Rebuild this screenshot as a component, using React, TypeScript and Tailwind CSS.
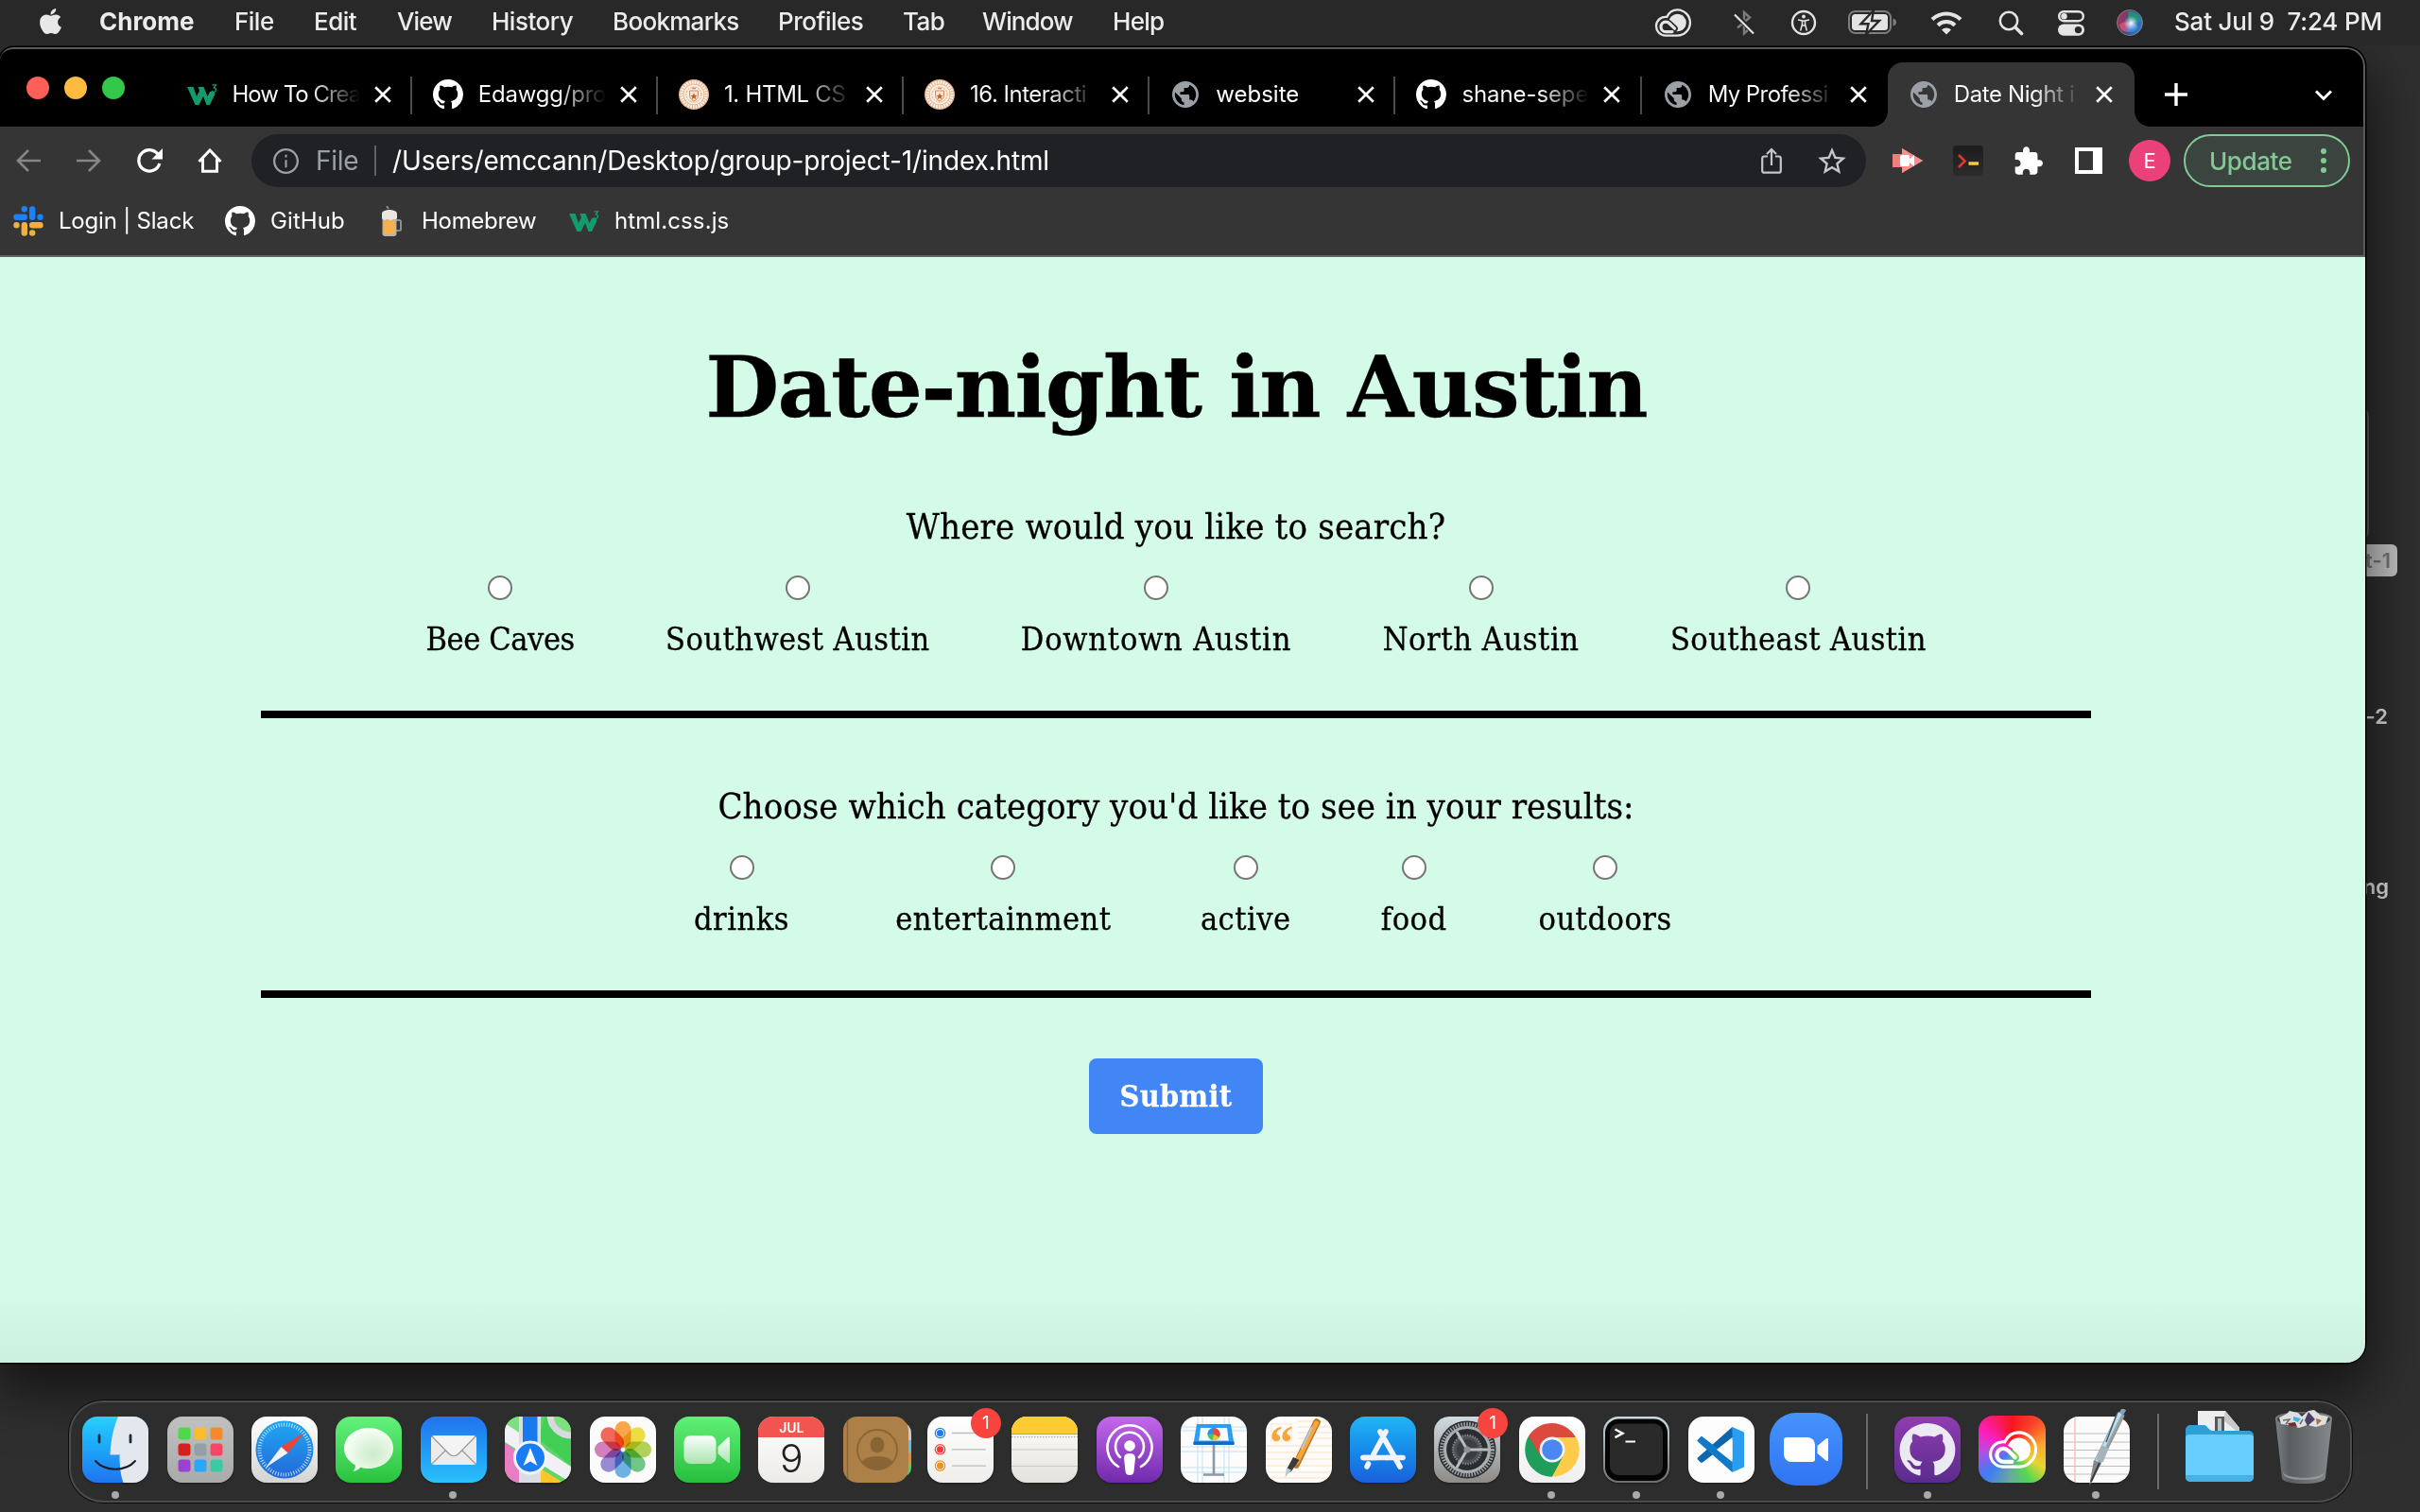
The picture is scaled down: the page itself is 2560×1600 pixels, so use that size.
import React from 'react';
import type { ReactNode } from 'react';
import { FaApple } from 'react-icons/fa';

/* ---------- shared glyphs ---------- */

const OCTOCAT =
  'M8 0C3.58 0 0 3.58 0 8c0 3.54 2.29 6.53 5.47 7.59.4.07.55-.17.55-.38 0-.19-.01-.82-.01-1.49-2.01.37-2.53-.49-2.69-.94-.09-.23-.48-.98-.82-1.17-.28-.15-.68-.52-.01-.53.63-.01 1.08.58 1.23.82.72 1.21 1.87.87 2.33.66.07-.52.28-.87.51-1.07-1.78-.2-3.64-.89-3.64-3.95 0-.87.31-1.59.82-2.15-.08-.2-.36-1.02.08-2.12 0 0 .67-.21 2.2.82.64-.18 1.32-.27 2-.27.68 0 1.36.09 2 .27 1.53-1.04 2.2-.82 2.2-.82.44 1.1.16 1.92.08 2.12.51.56.82 1.27.82 2.15 0 3.07-1.87 3.75-3.65 3.95.29.25.54.73.54 1.48 0 1.07-.01 1.93-.01 2.2 0 .21.15.46.55.38A8.013 8.013 0 0016 8c0-4.42-3.58-8-8-8z';
const GLOBE =
  'M12 2C6.48 2 2 6.48 2 12s4.48 10 10 10 10-4.48 10-10S17.52 2 12 2zm-1 17.93c-3.95-.49-7-3.85-7-7.93 0-.62.08-1.21.21-1.79L9 15v1c0 1.1.9 2 2 2v1.93zm6.9-2.54c-.26-.81-1-1.39-1.9-1.39h-1v-3c0-.55-.45-1-1-1H8v-2h2c.55 0 1-.45 1-1V7h2c1.1 0 2-.9 2-2v-.41c2.93 1.19 5 4.06 5 7.41 0 2.08-.8 3.97-2.1 5.39z';

function Octocat() {
  return (
    <svg viewBox="0 0 16 16" className="size-8 fill-white">
      <path d={OCTOCAT} />
    </svg>
  );
}

function Globe() {
  return (
    <svg viewBox="2 2 20 20" className="size-7 fill-[#9aa0a6]">
      <path d={GLOBE} />
    </svg>
  );
}

function W3Logo() {
  return (
    <svg viewBox="0 0 32 32" className="size-8">
      <path d="M0 8h6.500l3.500 10 3-6-1.500-4h6l4 10 2.500-5h4.500l1 2.500-5.500 11.500h-3.500L17 18l-4.500 9H8.500z" fill="#159a6b" />
      <path d="M26.500 5.800h4l-2.200 3c3 .3 2.700 4.500-.1 4.500-1.200 0-1.800-.5-2.200-1.400" fill="none" stroke="#159a6b" strokeWidth="1.300" />
    </svg>
  );
}

function Seal() {
  return (
    <svg viewBox="0 0 32 32" className="size-8">
      <circle cx="16" cy="16" r="16" fill="#e7b48f" />
      <circle cx="16" cy="16" r="13" fill="none" stroke="#fff6ee" strokeWidth="3.400" strokeDasharray="1.700 1.100" />
      <circle cx="16" cy="16" r="10.500" fill="#fbeee4" />
      <circle cx="16" cy="16" r="8" fill="none" stroke="#dfa27a" strokeWidth="1" strokeDasharray="2 1" />
      <path d="M11.500 12h9v5c0 3-2.200 5-4.500 6-2.300-1-4.500-3-4.500-6z" fill="#f9e2d2" stroke="#d48d5e" strokeWidth="1" />
      <path d="M16 14.500l1 2.300 2.400.2-1.800 1.600.6 2.400-2.200-1.300-2.200 1.300.6-2.400-1.800-1.600 2.400-.2z" fill="#bf5f22" />
      <path d="M14 9.500h4" stroke="#d48d5e" strokeWidth="1.600" />
    </svg>
  );
}

/* ---------- menu bar ---------- */

const MENUS = [
  { label: 'File', cls: 'w-[84px]' },
  { label: 'Edit', cls: 'w-[88px]' },
  { label: 'View', cls: 'w-[100px] tracking-[-0.9px]' },
  { label: 'History', cls: 'w-[128px]' },
  { label: 'Bookmarks', cls: 'w-[175px] tracking-[-0.7px]' },
  { label: 'Profiles', cls: 'w-[132px]' },
  { label: 'Tab', cls: 'w-[84px]' },
  { label: 'Window', cls: 'w-[138px] tracking-[-0.9px]' },
  { label: 'Help', cls: 'w-[80px] tracking-[-0.7px]' },
];

const CC_LOOP = 'M19 24.600H12.200a5.200 5.200 0 0 1 0-10.400c1.700 0 2.900.7 4 1.800l5.300 5.200';

function CreativeCloud({ className, color }: { className: string; color: string }) {
  return (
    <svg viewBox="0 0 39 30" className={className} fill="none" stroke={color} strokeLinecap="round">
      <mask id="cc-cut">
        <path d="M0 0h39v30H0z" fill="#fff" stroke="none" />
        <path d={CC_LOOP} stroke="#000" strokeWidth="6.600" />
        <path d="M14 11.500c2.600-.2 4.600.8 6.200 2.400l6.300 6" stroke="#000" strokeWidth="0" />
      </mask>
      <path d="M12 28.600a9.900 9.900 0 1 1 1.300-19.700C15.500 4.300 19.600 1.400 24.300 1.400a13.500 13.500 0 0 1 0 27.200z" strokeWidth="2.300" />
      <circle cx="24.500" cy="15" r="9.300" fill={color} stroke="none" mask="url(#cc-cut)" />
      <path d={CC_LOOP} strokeWidth="3.200" />
    </svg>
  );
}

function MenuBar() {
  return (
    <header className="relative z-10 flex h-12 items-center bg-[#282828] pb-[3px] text-[26px] font-medium tracking-[-0.5px] text-[#ececec]">
      <FaApple className="ml-[38px] size-[31px] text-[#e8e8e8]" />
      <span className="ml-9 w-[143px] font-bold tracking-[0px]">Chrome</span>
      <nav className="flex">
        {MENUS.map((m) => (
          <span key={m.label} className={m.cls}>
            {m.label}
          </span>
        ))}
      </nav>
      <div className="mt-[3px] ml-auto flex items-center pr-[34px]">
        <CreativeCloud className="h-[30px] w-[39px]" color="#e4e4e4" />
        <svg viewBox="0 0 22 28" className="ml-[45px] h-7 w-[22px]" fill="none">
          <path d="M4 9l13 11-6 5.500V3l6 5.500L4 19.500" stroke="#7b7b7b" strokeWidth="2.400" />
          <path d="M0 3l22 23" stroke="#282828" strokeWidth="5" />
          <path d="M1 5.500L21 25.500" stroke="#e4e4e4" strokeWidth="2.200" />
        </svg>
        <svg viewBox="0 0 28 28" className="ml-[38px] size-7" fill="none" stroke="#e4e4e4">
          <circle cx="14" cy="14" r="12" strokeWidth="2.400" />
          <circle cx="14" cy="7.500" r="1.900" fill="#e4e4e4" stroke="none" />
          <path d="M8.500 11l4 .9v3.500L10.800 22M19.500 11l-4 .9v3.500l1.700 6.600M12.500 12h3v5h-3z" strokeWidth="1.500" strokeLinecap="round" />
        </svg>
        <svg viewBox="0 0 51 26" className="ml-[33px] h-[26px] w-[51px]">
          <rect x="1" y="1" width="44" height="23" rx="6.500" fill="none" stroke="#7d7d7d" strokeWidth="2" />
          <rect x="4" y="4" width="38" height="17" rx="3.500" fill="#e4e4e4" />
          <path d="M47.500 8.500v8c2.500-.8 3.500-2 3.500-4s-1-3.200-3.500-4z" fill="#7d7d7d" />
          <path d="M27 0L13.500 14.300h8L19 25.500 33 11h-8z" fill="#e4e4e4" stroke="#282828" strokeWidth="2.400" />
        </svg>
        <svg viewBox="0 0 34 26" className="ml-[36px] h-[26px] w-[34px]" fill="none" stroke="#e4e4e4" strokeWidth="4">
          <path d="M2 9.500a21.500 21.500 0 0 1 30 0" />
          <path d="M8 15.700a13 13 0 0 1 18 0" />
          <path d="M17 25.500l-5-5a7.200 7.200 0 0 1 10 0z" fill="#e4e4e4" stroke="none" />
        </svg>
        <svg viewBox="0 0 27 27" className="ml-[38px] size-[27px]" fill="none" stroke="#e4e4e4" strokeLinecap="round">
          <circle cx="11" cy="11" r="9.200" strokeWidth="2.500" />
          <path d="M18 18l6.500 6.500" strokeWidth="3.600" />
        </svg>
        <svg viewBox="0 0 28 27" className="ml-[36px] h-[27px] w-7">
          <rect x="1.200" y="1.200" width="25.600" height="10" rx="5" fill="none" stroke="#e4e4e4" strokeWidth="2.400" />
          <circle cx="6.500" cy="6.200" r="3.200" fill="#e4e4e4" />
          <rect x="0" y="14.500" width="28" height="12.300" rx="6.100" fill="#e4e4e4" />
          <circle cx="21.500" cy="20.600" r="3.700" fill="#282828" />
        </svg>
        <svg viewBox="0 0 28 28" className="ml-[34px] size-7">
          <defs>
            <linearGradient id="siri" x1="0" y1="0.300" x2="1" y2="0.700">
              <stop offset="0" stopColor="#c02a55" />
              <stop offset="0.450" stopColor="#3c4f78" />
              <stop offset="1" stopColor="#2b7fd0" />
            </linearGradient>
            <radialGradient id="siri2" cx="0.550" cy="0.520" r="0.300">
              <stop offset="0" stopColor="#fff" />
              <stop offset="1" stopColor="#bfe9ff" stopOpacity="0" />
            </radialGradient>
          </defs>
          <circle cx="14" cy="14" r="13.500" fill="url(#siri)" stroke="#8c8c94" strokeWidth="0.800" />
          <path d="M13 2c8 0 12.500 5 12.500 11-4-1-6 1-9 2-3-4-6-8-3.500-13z" fill="#1f9a7a" opacity="0.850" />
          <path d="M3 16c4-4 9-3 11-1 2 4 1 8-1 9-6 0-9-3-10-8z" fill="#e9547f" opacity="0.750" />
          <path d="M14 15c4-1 8 1 9 4-3 5-8 6-12 4 0-3 1-6 3-8z" fill="#3f8fe8" opacity="0.800" />
          <circle cx="14" cy="14" r="13" fill="url(#siri2)" />
        </svg>
        <span className="-mt-[3px] ml-[33px] w-[226px] tracking-[-0.2px] whitespace-pre">Sat Jul 9  7:24 PM</span>
      </div>
    </header>
  );
}

/* ---------- browser chrome ---------- */

const TABS: { title: string; icon: ReactNode; active?: boolean; line?: boolean; short?: boolean; cls: string }[] = [
  { title: 'How To Crea', icon: <W3Logo />, line: true, cls: 'tracking-[-1px]' },
  { title: 'Edawgg/pro', icon: <Octocat />, line: true, cls: 'tracking-[-0.2px]' },
  { title: '1. HTML CS', icon: <Seal />, line: true, cls: 'tracking-[-0.3px]' },
  { title: '16. Interacti', icon: <Seal />, line: true, cls: 'tracking-[-0.5px]' },
  { title: 'website', icon: <Globe />, line: true, short: true, cls: 'tracking-[0px]' },
  { title: 'shane-sepe', icon: <Octocat />, line: true, cls: 'tracking-[-0.1px]' },
  { title: 'My Professi', icon: <Globe />, cls: 'tracking-[-0.6px]' },
  { title: 'Date Night i', icon: <Globe />, active: true, cls: 'tracking-[-0.4px]' },
];

function TabStrip() {
  return (
    <div className="flex h-[84px] bg-black pt-4">
      <div className="flex w-[175.5px] items-center gap-4 pb-[14px] pl-7">
        <i className="size-6 rounded-full bg-[#fe5f57]" />
        <i className="size-6 rounded-full bg-[#febb40]" />
        <i className="size-6 rounded-full bg-[#34c84a]" />
      </div>
      {TABS.map((t) => (
        <div
          key={t.title}
          className={
            t.active
              ? 'relative flex w-[261px] items-center rounded-t-2xl bg-[#353535]'
              : 'relative flex w-[260.2px] items-center'
          }
        >
          {t.active && (
            <>
              <i className="absolute bottom-0 -left-4 size-4 bg-[radial-gradient(circle_at_0_0,#000_15.5px,#353535_16px)]" />
              <i className="absolute -right-4 bottom-0 size-4 bg-[radial-gradient(circle_at_100%_0,#000_15.5px,#353535_16px)]" />
            </>
          )}
          <span className="ml-[22px] flex w-8 justify-center">{t.icon}</span>
          <span className="ml-4 w-[142px] text-2xl whitespace-nowrap">
            <span
              className={`${t.cls} ${t.short ? 'text-white' : 'inline-block w-[138px] bg-linear-to-r from-white from-60% to-transparent to-98% bg-clip-text text-transparent'}`}
            >
              {t.title}
            </span>
          </span>
          <svg viewBox="0 0 18 18" className="ml-[8px] size-[18px] stroke-white" strokeWidth="2.700">
            <path d="M1.200 1.200l15.600 15.600M16.800 1.200L1.200 16.800" />
          </svg>
          {t.line && <i className="absolute top-[15px] right-0 h-10 w-[2px] bg-[#4b4b4b]" />}
        </div>
      ))}
      <svg viewBox="0 0 24 24" className="mt-[22px] ml-[32px] size-6 stroke-white" strokeWidth="3.400">
        <path d="M12 0v24M0 12h24" />
      </svg>
      <svg viewBox="0 0 18 12" className="mt-[29px] mr-[35px] ml-auto h-3 w-[18px] fill-none stroke-white" strokeWidth="3">
        <path d="M1 1.500l8 8 8-8" />
      </svg>
    </div>
  );
}

function Toolbar() {
  return (
    <div className="flex h-[72px] items-center bg-[#353535] pl-[17px] text-white">
      <svg viewBox="0 0 26 24" className="h-6 w-[26px] fill-none stroke-[#868686]" strokeWidth="2.600">
        <path d="M26 12H2M13 1L2 12l11 11" />
      </svg>
      <svg viewBox="0 0 26 24" className="ml-[38px] h-6 w-[26px] fill-none stroke-[#868686]" strokeWidth="2.600">
        <path d="M0 12h24M13 1l11 11-11 11" />
      </svg>
      <svg viewBox="0 0 28 28" className="ml-[37px] size-7 fill-none stroke-white" strokeWidth="3.200">
        <path d="M24 8.800A11.200 11.200 0 1 0 24.800 17" />
        <path d="M28 1v11.500H16.500z" fill="#fff" stroke="none" />
      </svg>
      <svg viewBox="0 0 26 26" className="ml-[37px] size-[26px] fill-none stroke-white" strokeWidth="3">
        <path d="M1.500 14L13 2l11.500 12M5.500 11v13.300h15V11" />
      </svg>
      <div className="ml-[31px] flex h-14 w-[1708px] items-center rounded-full bg-[#202124] pl-[23px] text-[28px]">
        <svg viewBox="2 2 20 20" className="size-[27px] fill-[#9aa0a6]">
          <path d="M11.200 7h1.600v2h-1.600zm0 4h1.600v6h-1.600zM12 2C6.480 2 2 6.480 2 12s4.480 10 10 10 10-4.480 10-10S17.520 2 12 2zm0 18.300c-4.570 0-8.300-3.730-8.300-8.300S7.430 3.700 12 3.700s8.300 3.730 8.300 8.300-3.730 8.300-8.300 8.300z" />
        </svg>
        <span className="ml-[18px] w-[62px] tracking-[-0.3px] text-[#9aa0a6]">File</span>
        <i className="h-8 w-[2px] bg-[#5f6368]" />
        <span className="ml-[17px] tracking-[-0.15px] whitespace-nowrap">
          /Users/emccann/Desktop/group-project-1/index.html
        </span>
        <svg viewBox="0 0 22 28" className="ml-auto h-7 w-[22px] fill-none stroke-[#c4c7ca]" strokeWidth="2.200">
          <path d="M7 9.500H3.500a2.300 2.300 0 0 0-2.300 2.300v12.600a2.300 2.300 0 0 0 2.300 2.300h15a2.300 2.300 0 0 0 2.300-2.300V11.800a2.300 2.300 0 0 0-2.300-2.300H15M11 19V2M6 7l5-5 5 5" />
        </svg>
        <svg viewBox="2 2 20 19" className="mr-[21px] ml-[38px] h-[28px] w-[30px] fill-[#c4c7ca]">
          <path d="M22 9.240l-7.190-.62L12 2 9.190 8.630 2 9.240l5.460 4.730L5.820 21 12 17.270 18.180 21l-1.630-7.030L22 9.240zM12 15.400l-3.760 2.270 1-4.280-3.320-2.880 4.380-.38L12 6.100l1.710 4.040 4.380.38-3.320 2.880 1 4.280L12 15.400z" />
        </svg>
      </div>
      <svg viewBox="0 0 32 28" className="ml-[28px] h-7 w-8">
        <path d="M0 7h10V1l22 13-22 13v-6H0z" fill="#f47c7c" />
        <path d="M10 1l22 13-22 13z" fill="#fa8e8e" />
        <rect x="8" y="8" width="10" height="12" rx="2" fill="#fff" />
        <path d="M17 13l6-5v12l-6-5z" fill="#fff" />
      </svg>
      <div className="ml-8 flex size-8 items-center justify-center rounded bg-linear-to-b from-[#1d1d1d] to-[#2b2b2b]">
        <svg viewBox="0 0 32 32" className="size-8 fill-none">
          <path d="M6 10l6.500 6.500L6 23" stroke="#e2372c" strokeWidth="2.600" />
          <path d="M16.500 19h10.500" stroke="#f6c945" strokeWidth="3.400" />
        </svg>
      </div>
      <svg viewBox="1.500 1 21.500 21" className="ml-[33px] size-[30px] fill-white">
        <path d="M20.500 11H19V7c0-1.100-.9-2-2-2h-4V3.500C13 2.120 11.880 1 10.500 1S8 2.120 8 3.500V5H4c-1.100 0-1.990.9-1.990 2v3.800H3.500c1.490 0 2.700 1.210 2.700 2.700s-1.210 2.700-2.700 2.700H2V20c0 1.100.9 2 2 2h3.800v-1.500c0-1.490 1.210-2.700 2.700-2.700 1.490 0 2.700 1.210 2.700 2.700V22H17c1.100 0 2-.9 2-2v-4h1.500c1.380 0 2.500-1.120 2.500-2.500S21.880 11 20.500 11z" />
      </svg>
      <div className="ml-[34px] h-7 w-[29px] border-[4px] border-r-[10px] border-white" />
      <div className="ml-[28px] flex size-11 items-center justify-center rounded-full bg-[#ec407a] text-[22px]">E</div>
      <div className="ml-[14px] flex h-14 w-44 items-center rounded-full border-2 border-[#81c995] bg-[#3c443f] pl-[25px] text-[26px] font-medium tracking-[-0.4px] text-[#81c995]">
        Update
        <span className="mr-[23px] ml-auto flex flex-col gap-1">
          <i className="size-[6px] rounded-full bg-[#81c995]" />
          <i className="size-[6px] rounded-full bg-[#81c995]" />
          <i className="size-[6px] rounded-full bg-[#81c995]" />
        </span>
      </div>
    </div>
  );
}

function BookmarksBar() {
  return (
    <div className="flex h-[66px] items-center border-b-2 border-[#636163] bg-[#353535] pb-[9px] pl-[14px] text-2xl tracking-[-0.2px] text-white">
      <svg viewBox="0 0 32 32" className="size-8" strokeWidth="6.400" strokeLinecap="round">
        <path d="M11.800 3.200v0M3.500 11.800h8.300M20.200 3.500v8.300M28.500 11.800v0" stroke="#1a82f7" />
        <path d="M3.500 20.200v0M11.800 20.200v8.300M20.200 20.200h8.300M20.200 28.500v0" stroke="#ecb23f" />
      </svg>
      <span className="ml-4 w-[176px]">Login | Slack</span>
      <Octocat />
      <span className="ml-4 w-[117px] tracking-[0.1px]">GitHub</span>
      <svg viewBox="0 0 22 32" className="h-8 w-[22px]">
        <path d="M16 15h3.500a1.500 1.500 0 0 1 1.500 1.500v8a1.500 1.500 0 0 1-1.500 1.500H16" fill="none" stroke="#8d8d88" strokeWidth="2" />
        <path d="M1.500 12h15v17a3 3 0 0 1-3 3h-9a3 3 0 0 1-3-3z" fill="#b9b4a6" />
        <path d="M3 15h12v13a2 2 0 0 1-2 2H5a2 2 0 0 1-2-2z" fill="#f8b04c" />
        <path d="M1 8c0-3 5-4 8-4s8 1 8 4v5c-2 2-3 0-5 1.500S7 13 5 14.500 1 13 1 13z" fill="#e9e6e0" />
        <path d="M6 0l2 3" stroke="#8d8d88" strokeWidth="2" />
      </svg>
      <span className="ml-[21px] w-[156px] tracking-[-0.3px]">Homebrew</span>
      <W3Logo />
      <span className="ml-4 tracking-[0.1px]">html.css.js</span>
    </div>
  );
}

/* ---------- page ---------- */

const AREAS = [
  { label: 'Bee Caves', cls: 'w-[157px] tracking-[-0.4px]' },
  { label: 'Southwest Austin', cls: 'w-[279px] tracking-[0.45px]' },
  { label: 'Downtown Austin', cls: 'w-[286px] tracking-[0.8px]' },
  { label: 'North Austin', cls: 'w-[208px] tracking-[0.6px]' },
  { label: 'Southeast Austin', cls: 'w-[270px] tracking-[0.4px]' },
];

const CATEGORIES = [
  { label: 'drinks', cls: 'mr-4 w-[101px]' },
  { label: 'entertainment', cls: 'w-[228px]' },
  { label: 'active', cls: 'w-[92px]' },
  { label: 'food', cls: 'w-[71px]' },
  { label: 'outdoors', cls: 'w-[141px]' },
];

function Option({ label, name, cls }: { label: string; name: string; cls: string }) {
  return (
    <label className={`flex flex-col items-center text-[34px] leading-10 whitespace-nowrap ${cls}`}>
      <input type="radio" name={name} className="mb-[21px] size-[26px] appearance-none rounded-full border-2 border-[#767676] bg-white" />
      {label}
    </label>
  );
}

function DatePage() {
  return (
    <main className="flex h-[1170px] flex-col items-center bg-linear-to-b from-[#d3fbe7] from-94% to-[#ccf0df] pr-[14px] font-['DejaVu_Serif_Condensed','DejaVu_Serif',serif] text-black [-webkit-text-stroke:0.3px]">
      <h1 className="mt-[89px] h-24 font-['DejaVu_Serif',serif] text-[90px] leading-24 font-bold tracking-[-1.8px] whitespace-nowrap">
        Date-night in Austin
      </h1>
      <p className="mt-[72px] h-14 text-[38px] leading-14 tracking-[0.15px]">Where would you like to search?</p>
      <div className="mt-6 flex w-[1936px] justify-center gap-[96.7px] border-b-8 border-black pb-14">
        {AREAS.map((a) => (
          <Option key={a.label} name="area" label={a.label} cls={a.cls} />
        ))}
      </div>
      <p className="mt-[65px] h-14 text-[38px] leading-14">Choose which category you'd like to see in your results:</p>
      <div className="mt-6 flex w-[1936px] justify-start gap-[96.4px] border-b-8 border-black pb-14 pl-[458px] tracking-[0.5px]">
        {CATEGORIES.map((c) => (
          <Option key={c.label} name="category" label={c.label} cls={c.cls} />
        ))}
      </div>
      <button className="mt-16 h-20 w-46 rounded-lg bg-[#4285f4] text-[32px] font-bold tracking-[0.4px] text-white">Submit</button>
    </main>
  );
}

/* ---------- dock ---------- */

function Tile({ bg, children }: { bg: string; children?: ReactNode }) {
  return (
    <div className={`size-[70px] overflow-hidden rounded-2xl shadow-[0_1px_2px_rgba(0,0,0,0.4)] ${bg}`}>
      <svg viewBox="0 0 70 70" className="size-full">
        {children}
      </svg>
    </div>
  );
}

function Finder() {
  return (
    <Tile bg="bg-linear-to-b from-[#2ad0fd] to-[#2074f0]">
      <path d="M38 0C32 14 30 28 29.500 40h10c0 12 1 22 4 30H70V0z" fill="#e3e7ee" />
      <path d="M29.500 40.500h10" stroke="#9fb0c4" strokeWidth="1" />
      <path d="M18 20v7M51 20v7" stroke="#1e2b3b" strokeWidth="2.800" strokeLinecap="round" />
      <path d="M14 47c10 11.500 32 11.500 42 0" fill="none" stroke="#1c1c22" strokeWidth="2" strokeLinecap="round" />
    </Tile>
  );
}

const PADS = [
  ['#4fd84a', '#f9bd2c', '#f38b2b'],
  ['#d81f1f', '#93a0a6', '#f94666'],
  ['#9a43cf', '#2ba7f7', '#3ccaa4'],
];

function Launchpad() {
  return (
    <Tile bg="bg-linear-to-b from-[#bfc0c0] to-[#a9aaaa]">
      {PADS.map((row, r) =>
        row.map((c, i) => <rect key={c} x={11.500 + i * 17} y={11.500 + r * 17} width="13" height="13" rx="3" fill={c} />),
      )}
    </Tile>
  );
}

function Safari() {
  return (
    <Tile bg="bg-linear-to-b from-white to-[#d4d4d4]">
      <defs>
        <linearGradient id="saf" x1="0" y1="0" x2="0" y2="1">
          <stop offset="0" stopColor="#1fa8f2" />
          <stop offset="1" stopColor="#2468da" />
        </linearGradient>
      </defs>
      <circle cx="35" cy="35" r="30.500" fill="url(#saf)" />
      <circle cx="35" cy="35" r="26.500" fill="none" stroke="#cfe6fb" strokeWidth="4" strokeDasharray="0.900 1.900" />
      <path d="M56 17L31.500 32l7 6.500z" fill="#ee4438" />
      <path d="M15 54l16.500-22 7 6.500z" fill="#f2f2f2" />
    </Tile>
  );
}

function Messages() {
  return (
    <Tile bg="bg-linear-to-b from-[#63f17c] to-[#27c33e]">
      <defs>
        <radialGradient id="msg" cx="0.600" cy="0.600" r="0.600">
          <stop offset="0" stopColor="#cdeacb" />
          <stop offset="1" stopColor="#f5fff4" />
        </radialGradient>
      </defs>
      <path d="M35 12c14.500 0 26 9.500 26 21.500S49.500 55 35 55c-3 0-6-.4-8.500-1.200-2 2.200-5 3.700-8 4.200 1.500-1.800 2.500-4 2.500-6.500C13.500 47.500 9 41 9 33.500 9 21.500 20.500 12 35 12z" fill="url(#msg)" />
    </Tile>
  );
}

function Mail() {
  return (
    <Tile bg="bg-linear-to-b from-[#2272ee] to-[#2bc0fb]">
      <rect x="11" y="20" width="48" height="31" rx="3.500" fill="#ececec" />
      <path d="M12 50l16-16M58 50L42 34" stroke="#9b9b9b" strokeWidth="1.200" />
      <path d="M12 21l18 18.500c3 2.800 7 2.800 10 0L58 21" fill="#f4f4f4" stroke="#9b9b9b" strokeWidth="1.300" />
    </Tile>
  );
}

function Maps() {
  return (
    <Tile bg="bg-[#5fd66c]">
      <path d="M0 0h18v22L0 8z" fill="#7be07f" />
      <path d="M42 0h28v52L36 24z" fill="#43cf55" />
      <circle cx="70" cy="-2" r="22" fill="#7fe07f" stroke="#d8d8de" strokeWidth="7" />
      <path d="M0 7l70 46v17L0 27z" fill="#f1f1f5" />
      <path d="M0 28l24 16v26H0z" fill="#e87dc3" />
      <path d="M36 54l26 16H36z" fill="#fbc52b" />
      <path d="M15 0h23v70H15z" fill="#dcdde4" />
      <path d="M19 0h15.500v38H19z" fill="#1878ee" />
      <circle cx="27" cy="43.500" r="16.500" fill="#1a7cf2" stroke="#f2f4f8" strokeWidth="3" />
      <path d="M27 33l7.500 19L27 47.500 19.500 52z" fill="#f6f7fa" />
    </Tile>
  );
}

const PETALS = ['#fb9a2a', '#efdc22', '#a6cf3a', '#5cbf77', '#55a8e2', '#8a78cf', '#cf6bb4', '#f2503f'];

function Photos() {
  return (
    <Tile bg="bg-[#fbfbfb]">
      {PETALS.map((c, i) => (
        <rect key={c} x="26.500" y="5" width="17" height="28" rx="8.500" fill={c} opacity="0.850" transform={`rotate(${i * 45} 35 35)`} className="mix-blend-multiply" />
      ))}
    </Tile>
  );
}

function FaceTime() {
  return (
    <Tile bg="bg-linear-to-b from-[#5ff077] to-[#25bf3c]">
      <defs>
        <linearGradient id="ft" x1="0" y1="0" x2="0" y2="1">
          <stop offset="0" stopColor="#fbfffb" />
          <stop offset="1" stopColor="#a8e4b0" />
        </linearGradient>
      </defs>
      <rect x="10.500" y="20" width="34" height="30" rx="7" fill="url(#ft)" />
      <path d="M46.500 32L57 22c1.200-1 2-.6 2 1v24.500c0 1.600-.8 2-2 1l-10.500-9z" fill="url(#ft)" />
    </Tile>
  );
}

function Calendar() {
  return (
    <div className="flex size-[70px] flex-col items-center overflow-hidden rounded-2xl bg-linear-to-b from-white to-[#ecebe8] font-['Inter',sans-serif]">
      <div className="h-[22px] w-full bg-[#f25550] text-center text-[14px] leading-[24px] font-semibold text-white">JUL</div>
      <div className="text-[41px] leading-[44px] font-light text-[#1f1f1f]">9</div>
    </div>
  );
}

function Contacts() {
  return (
    <svg viewBox="0 0 74 70" className="ml-1 h-[70px] w-[74px]">
      <path d="M62 6q10 2 10 12v8H62z" fill="#c9c9c9" />
      <path d="M62 25h10v13H62z" fill="#59c2f0" />
      <path d="M62 38h10v12H62z" fill="#f08a24" />
      <path d="M62 50h10v4q0 8-10 10z" fill="#4fd566" />
      <rect x="0" y="0" width="69" height="70" rx="15" fill="#ad8048" />
      <path d="M4.500 4v62" stroke="#8c6534" strokeWidth="1.500" />
      <circle cx="36" cy="35" r="21" fill="none" stroke="#8a6534" strokeWidth="1.800" />
      <ellipse cx="36" cy="30" rx="7.500" ry="8.500" fill="#8a6534" />
      <path d="M20 48c3-8 29-8 32 0-3 5-9 8.500-16 8.500S23 53 20 48z" fill="#8a6534" />
    </svg>
  );
}

function Reminders() {
  return (
    <Tile bg="bg-linear-to-b from-white to-[#efeeec]">
      {['#1a7cf6', '#f23c37', '#f2901f'].map((c, i) => (
        <g key={c}>
          <circle cx="13.500" cy={17.500 + i * 17.300} r="5.200" fill="#fff" stroke={c} strokeWidth="1.200" />
          <circle cx="13.500" cy={17.500 + i * 17.300} r="3.600" fill={c} />
          <path d={`M26 ${17.500 + i * 17.300}h36`} stroke="#bdbdbf" strokeWidth="1.300" />
        </g>
      ))}
    </Tile>
  );
}

function Notes() {
  return (
    <Tile bg="bg-linear-to-b from-white to-[#e4e2db]">
      <path d="M0 0h70v18H0z" fill="#fecb33" />
      <path d="M0 18.500h70" stroke="#a9a08c" strokeWidth="1" />
      <path d="M0 21.500h70" stroke="#b5b5b0" strokeWidth="1.500" strokeDasharray="1.500 1.500" />
      <path d="M0 35h70M0 52.500h70" stroke="#cbcac8" strokeWidth="1.200" />
    </Tile>
  );
}

function Podcasts() {
  return (
    <Tile bg="bg-linear-to-b from-[#c567ec] to-[#7129ac]">
      <g fill="none" stroke="#fff" strokeWidth="2.600" strokeLinecap="round">
        <path d="M23 53a23.500 23.500 0 1 1 24 0" />
        <path d="M25 43a15 15 0 1 1 20 0" />
      </g>
      <circle cx="35" cy="31" r="5.800" fill="#fff" />
      <path d="M35 39c4 0 6.300 2 5.900 6l-1.400 13c-.3 2.500-1.800 4-4.500 4s-4.200-1.500-4.500-4l-1.400-13c-.4-4 1.900-6 5.900-6z" fill="#fff" />
    </Tile>
  );
}

function Keynote() {
  return (
    <Tile bg="bg-[#fcfcfc]">
      <path d="M18 0v70M23 0v70M46 0v70M51 0v70M0 11h70M0 15h70M0 32h70M0 37h70M0 54h70M0 59h70" stroke="#c3dff2" strokeWidth="1" />
      <path d="M35 30v32M24 61.500h22" stroke="#8c98a6" strokeWidth="2.600" />
      <path d="M17 8h36l3.500 21h-43z" fill="#2a9df4" />
      <path d="M13.500 26.500h43V30h-43z" fill="#1766c4" />
      <path d="M21 12h28l1.800 13.500H19.200z" fill="#f7fbff" />
      <circle cx="35" cy="18.700" r="6.600" fill="#4cc35f" />
      <path d="M35 18.700V12.100a6.600 6.600 0 0 1 5.700 9.900z" fill="#f0463c" />
      <path d="M35 18.700l5.700 3.300a6.600 6.600 0 0 1-7 3.200z" fill="#f7c12e" />
      <path d="M35 18.700h-6.600a6.600 6.600 0 0 1 6.600-6.600z" fill="#2f8fe8" />
    </Tile>
  );
}

function Pages() {
  return (
    <Tile bg="bg-[#fdfcfa]">
      <path d="M34 5h36M34 11h36M34 17h36M34 23h36M0 31h70M0 38h70M0 45h70M0 52h70M0 59h70M0 65h70" stroke="#fbe0bf" strokeWidth="1.200" />
      <rect x="6" y="8" width="21" height="18" fill="none" stroke="#f8dfc0" strokeWidth="0.800" />
      <text x="4" y="44" fontFamily="Liberation Serif, serif" fontWeight="bold" fontSize="50" fill="#f8a437">
        “
      </text>
      <path d="M54 6l-22 45" stroke="#b8762a" strokeWidth="7.500" strokeLinecap="round" />
      <path d="M53.500 7L33 48" stroke="#f8a636" strokeWidth="5" strokeLinecap="round" />
      <path d="M49 11L38 34" stroke="#b9c9d6" strokeWidth="2.200" />
      <path d="M29 43l6.500 3L27 58l-5 2 1-6z" fill="#3c3a3a" />
      <path d="M22 54l5 2.500-6.500 8z" fill="#b8c8d2" />
    </Tile>
  );
}

function AppStore() {
  return (
    <Tile bg="bg-linear-to-b from-[#22b5f5] to-[#1b5fdc]">
      <g stroke="#f1f5fb" strokeWidth="5.600" strokeLinecap="round" fill="none">
        <path d="M38 16L25 40M32 16l21 37M14 43.500h14M39 43.500h17M19.500 50l-1.500 3" />
        <path d="M14 43.500h26" />
      </g>
    </Tile>
  );
}

function Settings() {
  return (
    <Tile bg="bg-linear-to-b from-[#cfdbe1] to-[#8f8b86]">
      <circle cx="35" cy="35" r="30.500" fill="#2b2d2f" />
      <circle cx="35" cy="35" r="27" fill="none" stroke="#9aa1a5" strokeWidth="4" strokeDasharray="1.600 1.400" />
      <circle cx="35" cy="35" r="23.500" fill="none" stroke="#a9b0b4" strokeWidth="3.200" />
      <circle cx="35" cy="35" r="15" fill="#4d5052" stroke="#7b8185" strokeWidth="2.500" strokeDasharray="1.500 1.200" />
      <circle cx="35" cy="35" r="11" fill="#3b3d3f" />
      <path d="M35 35h22M35 35L24 16M35 35L24 54" stroke="#b6bcbf" strokeWidth="3" />
      <circle cx="35" cy="35" r="3.500" fill="#8d9295" />
    </Tile>
  );
}

function ChromeIcon() {
  return (
    <Tile bg="bg-linear-to-b from-white to-[#efefef]">
      <path d="M10.100 20.600A28.800 28.800 0 0 0 35 63.800L47.500 42 35 35z" fill="#1f9d5b" />
      <path d="M10.100 20.600L22.500 42 35 22h24.900A28.800 28.800 0 0 0 10.100 20.600z" fill="#da4a3d" />
      <path d="M35 22h25.600c2 4 3.200 8.500 3.200 13A28.800 28.800 0 0 1 35 63.800L46.500 42z" fill="#fecb4a" />
      <circle cx="35" cy="35" r="13.400" fill="#f4f6fa" />
      <circle cx="35" cy="35" r="10.800" fill="#4a87f0" />
    </Tile>
  );
}

function Terminal() {
  return (
    <Tile bg="bg-linear-to-b from-[#c8dbe2] to-[#6f6f70]">
      <rect x="2" y="2.500" width="66" height="65.500" rx="14.500" fill="#050505" />
      <rect x="7" y="7.500" width="56" height="54.500" rx="9" fill="#2a2a2a" />
      <path d="M12.500 13.500l8 4.300-8 4.300" stroke="#fff" strokeWidth="2.400" fill="none" />
      <path d="M23.500 26.500h10.500" stroke="#fff" strokeWidth="2.200" />
    </Tile>
  );
}

function VsCode() {
  return (
    <Tile bg="bg-[#fdfdfd]">
      <path d="M46.500 11L10 43.500c-.6.6-.6 1.500 0 2l3 3c.6.500 1.400.6 2 .1L50 22z" fill="#0c66ad" />
      <path d="M46.500 59L10 26.500c-.6-.6-.6-1.500 0-2l3-3c.6-.5 1.400-.6 2-.1L50 48z" fill="#1279c9" />
      <path d="M46.500 11L59 16.500v37L46.500 59z" fill="#2a9df0" />
      <path d="M46.500 22v26L30 35z" fill="#fdfdfd" />
    </Tile>
  );
}

function Zoom() {
  return (
    <div className="flex size-[77px] items-center justify-center rounded-[28px] bg-linear-to-b from-[#4793fb] to-[#3074f3]">
      <svg viewBox="0 0 47 26" className="mt-[1px] h-[26px] w-[47px] fill-white">
        <path d="M0 3a3 3 0 0 1 3-3h22a8 8 0 0 1 8 8v15a3 3 0 0 1-3 3H8a8 8 0 0 1-8-8z" />
        <path d="M35.500 9l9-7.500c1.500-1 2.500-.5 2.500 1v21c0 1.500-1 2-2.500 1l-9-7.500z" />
      </svg>
    </div>
  );
}

function GitHubDesktop() {
  return (
    <Tile bg="bg-linear-to-b from-[#8f3db0] to-[#5b2b8c]">
      <g transform="translate(5.500 7) scale(3.680 3.550)">
        <path d={OCTOCAT} fill="#ebe9f1" />
      </g>
    </Tile>
  );
}

function CreativeCloudApp() {
  return (
    <div className="flex size-[71px] items-center justify-center rounded-2xl bg-[conic-gradient(from_0deg,#f9141c,#f8442b_40deg,#fba52c_80deg,#e9d52f_120deg,#52d851_150deg,#6aa7a0_185deg,#3f7cf3_225deg,#b34fe0_265deg,#fb1fc0_300deg,#f9141c)]">
      <CreativeCloud className="h-[40px] w-[52px]" color="#ffffff" />
    </div>
  );
}

function TextEdit() {
  return (
    <div className="relative">
      <Tile bg="bg-[#fbfbfb]">
        <path d="M0 18h70M0 27h70M0 35.500h70M0 44h70M0 52.500h70M0 61h70" stroke="#bdbdbd" strokeWidth="1.200" />
        <path d="M12 0v70" stroke="#f5bcbc" strokeWidth="1.400" />
      </Tile>
      <svg viewBox="0 0 46 82" className="absolute -top-[8px] left-[25px] h-[82px] w-[46px] fill-none">
        <path d="M36 5L11 56" stroke="#8ba7b9" strokeWidth="8" />
        <path d="M35 4L10 55" stroke="#c3dcec" strokeWidth="3.500" />
        <path d="M38.500 8L15 55" stroke="#a98e68" strokeWidth="1.200" />
        <path d="M31 6L20 35" stroke="#4c5963" strokeWidth="1.500" />
        <path d="M19 40l-6 15" stroke="#a5b3bb" strokeWidth="8" />
        <path d="M7 54l8 3.500L4 78l-1.500 3 .5-5z" fill="#85898c" />
        <path d="M13 57L4 77" stroke="#3c3c3e" strokeWidth="2" />
        <path d="M36 5l3-5" stroke="#7fa2b9" strokeWidth="5" />
      </svg>
    </div>
  );
}

function DocsFolder() {
  return (
    <svg viewBox="0 0 72 78" className="-mt-[7px] h-[78px] w-[72px]">
      <path d="M13 2h29l15 18v14H13z" fill="#eeeeee" />
      <path d="M42 2l15 18v6L40 12z" fill="#c9c9c9" />
      <path d="M31 8h10v18H31z" fill="#55595c" />
      <path d="M34 10h4v14h-4z" fill="#b7c4cc" />
      <path d="M0 22a5 5 0 0 1 5-5h15c3 0 4 6 9 6h38a5 5 0 0 1 5 5v20H0z" fill="#2f9fd6" />
      <path d="M0 31a4 4 0 0 1 4-4h64a4 4 0 0 1 4 4v41a5 5 0 0 1-5 5H5a5 5 0 0 1-5-5z" fill="#66cdfd" />
      <path d="M0 70h72v2a5 5 0 0 1-5 5H5a5 5 0 0 1-5-5z" fill="#47b0e6" />
    </svg>
  );
}

function Trash() {
  return (
    <svg viewBox="0 0 62 80" className="-mt-[5px] h-20 w-[62px]">
      <defs>
        <linearGradient id="can" x1="0" y1="0" x2="1" y2="0">
          <stop offset="0" stopColor="#7b8083" />
          <stop offset="0.250" stopColor="#5a5e60" />
          <stop offset="0.600" stopColor="#6d7173" />
          <stop offset="1" stopColor="#85898b" />
        </linearGradient>
      </defs>
      <path d="M1 10c0-4 12-7 30-7s30 3 30 7L54 73c-1 8-45 8-46 0z" fill="url(#can)" />
      <ellipse cx="31" cy="11" rx="28" ry="6.500" fill="#3c3f41" />
      <path d="M5 9l8-4 3-3 9 2 4 4 7-6 6-1 6 5 9 2-3 8-10 3-9-2-9 3-10-3-9-1z" fill="#dfdfdf" />
      <path d="M20 8l8 2-3 4-5-2z" fill="#45b5d6" />
      <path d="M36 3l7 8-8 7-3-6z" fill="#4b3f66" />
      <path d="M44 10l6 2-5 5z" fill="#b06a37" />
      <path d="M9 12l7-1-4 5M27 16l3-5" stroke="#6d6d6d" strokeWidth="1.500" fill="none" />
      <path d="M14 15l8-1 2 5-8-1z" fill="#6b2f30" />
      <path d="M9 66c0 9 44 9 44 0 0 6-6 9-22 9S9 72 9 66z" fill="#9ca1a3" opacity="0.800" />
    </svg>
  );
}

const APPS: { name: string; icon: ReactNode; running?: boolean; badge?: string }[] = [
  { name: 'Finder', icon: <Finder />, running: true },
  { name: 'Launchpad', icon: <Launchpad /> },
  { name: 'Safari', icon: <Safari /> },
  { name: 'Messages', icon: <Messages /> },
  { name: 'Mail', icon: <Mail />, running: true },
  { name: 'Maps', icon: <Maps /> },
  { name: 'Photos', icon: <Photos /> },
  { name: 'FaceTime', icon: <FaceTime /> },
  { name: 'Calendar', icon: <Calendar /> },
  { name: 'Contacts', icon: <Contacts /> },
  { name: 'Reminders', icon: <Reminders />, badge: '1' },
  { name: 'Notes', icon: <Notes /> },
  { name: 'Podcasts', icon: <Podcasts /> },
  { name: 'Keynote', icon: <Keynote /> },
  { name: 'Pages', icon: <Pages /> },
  { name: 'App Store', icon: <AppStore /> },
  { name: 'Settings', icon: <Settings />, badge: '1' },
  { name: 'Chrome', icon: <ChromeIcon />, running: true },
  { name: 'Terminal', icon: <Terminal />, running: true },
  { name: 'VS Code', icon: <VsCode />, running: true },
  { name: 'Zoom', icon: <Zoom /> },
];

const RECENT: { name: string; icon: ReactNode; running?: boolean; badge?: string }[] = [
  { name: 'GitHub Desktop', icon: <GitHubDesktop />, running: true },
  { name: 'Creative Cloud', icon: <CreativeCloudApp /> },
  { name: 'TextEdit', icon: <TextEdit />, running: true },
];

function DockItem({ icon, running, badge }: { icon: ReactNode; running?: boolean; badge?: string }) {
  return (
    <div className="relative flex h-[104px] w-[89.4px] items-center justify-center pb-[5px]">
      {icon}
      {badge && (
        <span className="absolute top-[6px] right-[2px] flex size-8 items-center justify-center rounded-full bg-[#f7443f] text-[19px] text-white">
          {badge}
        </span>
      )}
      {running && <i className="absolute bottom-[2px] left-[40px] size-2 rounded-full bg-[#a9a9a9]" />}
    </div>
  );
}

function Dock() {
  return (
    <footer className="relative mt-10 ml-[73px] flex h-[108px] w-[2415px] rounded-[36px] border-2 border-[#4c4c4c] bg-[#2d2d2d] pl-[2.5px] shadow-[0_0_0_1px_#0c0c0c]">
      {APPS.map((a) => (
        <DockItem key={a.name} icon={a.icon} running={a.running} badge={a.badge} />
      ))}
      <div className="flex w-10 justify-center pt-3">
        <i className="h-20 w-[2px] bg-[#6a6a6a]" />
      </div>
      {RECENT.map((a) => (
        <DockItem key={a.name} icon={a.icon} running={a.running} />
      ))}
      <div className="flex w-10 justify-center pt-3">
        <i className="h-20 w-[2px] bg-[#6a6a6a]" />
      </div>
      <DockItem icon={<DocsFolder />} />
      <DockItem icon={<Trash />} />
    </footer>
  );
}

/* ---------- desktop ---------- */

export default function App() {
  return (
    <div className="relative h-[1600px] w-[2560px] overflow-hidden bg-[#2f2f2f] font-['Inter',sans-serif]">
      <div className="absolute top-[433px] left-[2496px] h-[136px] w-[10px] rounded-r-md border-2 border-[#5b5b5b]" />
      <div className="absolute top-[576px] right-[24px] h-[34px] rounded-md bg-[#c4c4c4] px-[7px] text-[22px] leading-[34px] font-semibold text-[#777]">project-1</div>
      <div className="absolute top-[742px] right-[34px] text-[22px] leading-8 font-semibold text-[#e4e4e4]">project-2</div>
      <div className="absolute top-[922px] right-[33px] text-[22px] leading-8 font-semibold text-[#e4e4e4]">coding</div>
      <MenuBar />
      <section className="relative mt-[2px] h-[1392px] w-[2502px] overflow-hidden rounded-r-[20px] rounded-tl-[14px] bg-[#353535] shadow-[0_0_0_1.500px_#000,0_24px_60px_6px_rgba(0,0,0,0.6)]">
        <TabStrip />
        <Toolbar />
        <BookmarksBar />
        <DatePage />
        <i className="pointer-events-none absolute inset-0 h-[220px] rounded-tl-[14px] rounded-tr-[20px] border-t-2 border-r-2 border-[#5b5b5b]" />
      </section>
      <Dock />
    </div>
  );
}
